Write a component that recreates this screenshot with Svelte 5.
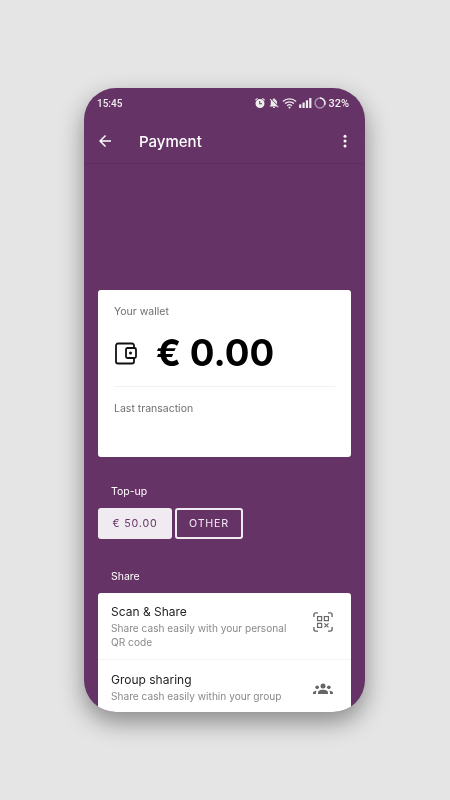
<script lang="ts">
  const shareOptions = [
    { title: 'Scan & Share', text: 'Share cash easily with your personal QR code', icon: 'qr' },
    { title: 'Group sharing', text: 'Share cash easily within your group', icon: 'group' }
  ];
</script>

<main class="stage">
  <div class="phone">
    <div class="status">
      <span class="time">15:45</span>
      <div class="status-icons">
        <svg width="12" height="12" viewBox="0 0 24 24" fill="#eee"><path d="M22 5.700 17.400 1.900l-1.300 1.500 4.600 3.900zM7.900 3.400 6.600 1.900 2 5.700l1.300 1.500zM12 4a9 9 0 1 0 0 18 9 9 0 0 0 0-18zm4 10.500h-5.500V8h2v4.500H16z"/></svg>
        <svg width="12" height="12" viewBox="0 0 24 24" fill="#eee"><path d="M20 18.700 7.300 5.900 4.800 3.400 3.400 4.800l2.800 2.800C5.700 8.600 5.500 9.800 5.500 11v5l-2 2v1h14.700l1.800 1.800 1.400-1.400zM12 22c1.100 0 2-.9 2-2h-4c0 1.100.9 2 2 2zm6-7.300V11c0-3.100-1.600-5.600-4.500-6.300V4a1.500 1.500 0 0 0-3 0v.7c-.7.200-1.300.4-1.900.8z"/></svg>
        <svg width="15" height="12" viewBox="0 0 24 20" fill="none" stroke="#eee" stroke-width="2.200"><path d="M1 7.500a16 16 0 0 1 22 0M4.500 11a11 11 0 0 1 15 0M8 14.500a6 6 0 0 1 8 0"/><circle cx="12" cy="17.500" r="1.800" fill="#eee" stroke="none"/></svg>
        <svg width="13" height="10" viewBox="0 0 14 11" fill="#eee"><rect x="0" y="7" width="2.400" height="4"/><rect x="3.700" y="5" width="2.400" height="6"/><rect x="7.400" y="2.500" width="2.400" height="8.500"/><rect x="11.100" y="0" width="2.400" height="11"/></svg>
        <svg class="battery" width="12" height="12" viewBox="0 0 12 12" fill="none"><circle cx="6" cy="6" r="4.900" stroke="#a792b0" stroke-width="1.500"/><path d="M6 1.100a4.900 4.900 0 0 1 4.500 6.800" stroke="#eee" stroke-width="1.500"/></svg>
        <span class="percent">32%</span>
      </div>
    </div>

    <header class="toolbar">
      <svg class="back" width="18" height="18" viewBox="0 0 24 24" fill="#fff"><path d="M20 11H7.800l5.600-5.600L12 4l-8 8 8 8 1.400-1.400L7.800 13H20z"/></svg>
      <h1>Payment</h1>
      <svg class="more" width="18" height="18" viewBox="0 0 24 24" fill="#fff"><circle cx="12" cy="5.500" r="2"/><circle cx="12" cy="12" r="2"/><circle cx="12" cy="18.500" r="2"/></svg>
    </header>

    <div class="content">
      <section class="wallet card">
        <p class="muted">Your wallet</p>
        <div class="balance">
          <svg class="wallet-icon" width="24" height="24" viewBox="0 0 24 24" fill="none" stroke="#111" stroke-width="1.800"><path d="M20 6V3.500a2 2 0 0 0-2-2H4a2 2 0 0 0-2 2v16a2 2 0 0 0 2 2h14a2 2 0 0 0 2-2V16"/><rect x="12" y="6" width="10" height="10" rx="1.500"/><circle cx="16.500" cy="11" r="1.500" fill="#111" stroke="none"/></svg>
          <span class="amount">€ 0.00</span>
        </div>
        <p class="muted last">Last transaction</p>
      </section>

      <h2 class="topup-label">Top-up</h2>
      <div class="buttons">
        <button class="fill">€ 50.00</button>
        <button class="outline">OTHER</button>
      </div>

      <h2 class="share-label">Share</h2>
      <ul class="card share">
        {#each shareOptions as opt}
          <li>
            <div class="opt-text">
              <strong>{opt.title}</strong>
              <span>{opt.text}</span>
            </div>
            {#if opt.icon === 'qr'}
              <svg class="opt-icon" width="20" height="20" viewBox="0 0 22 22" fill="none" stroke="#666" stroke-width="1.500"><path d="M1 5.500V3a2 2 0 0 1 2-2h2.500M16.500 1H19a2 2 0 0 1 2 2v2.500M21 16.500V19a2 2 0 0 1-2 2h-2.500M5.500 21H3a2 2 0 0 1-2-2v-2.500"/><rect x="5" y="5" width="4.500" height="4.500" stroke-width="1.300"/><rect x="12.500" y="5" width="4.500" height="4.500" stroke-width="1.300"/><rect x="5" y="12.500" width="4.500" height="4.500" stroke-width="1.300"/><path d="M12.500 12.500l4.500 4.500M17 12.500l-4.500 4.500" stroke-width="1.300"/></svg>
            {:else}
              <svg class="opt-icon" width="20" height="20" viewBox="0 0 24 24" fill="#666"><circle cx="12" cy="8.500" r="3"/><circle cx="5" cy="10" r="2.200"/><circle cx="19" cy="10" r="2.200"/><path d="M6 18v-1.500C6 14 9 13 12 13s6 1 6 3.500V18zM0 18v-1.200c0-1.500 1.700-2.500 4.500-2.600-.6.600-.9 1.400-.9 2.300V18zM24 18v-1.200c0-1.500-1.700-2.500-4.500-2.600.6.600.9 1.400.9 2.300V18z"/></svg>
            {/if}
          </li>
        {/each}
      </ul>
    </div>
  </div>
</main>

<style>
  :global(body) {
    margin: 0;
    background: #e5e5e5;
  }

  .stage {
    width: 449px;
    height: 800px;
    display: flex;
    justify-content: center;
    padding-top: 88px;
    box-sizing: border-box;
  }

  .phone {
    width: 281px;
    height: 624px;
    border-radius: 32px;
    background: #663366;
    overflow: hidden;
    box-shadow: 0 10px 24px rgba(0, 0, 0, 0.4);
    font-family: Inter, sans-serif;
    flex-shrink: 0;
    /* reference is a scaled-down capture, so everything is a bit soft */
    filter: blur(0.3px);
  }

  .status {
    height: 30px;
    display: flex;
    align-items: center;
    justify-content: space-between;
    padding: 0 16px 0 13px;
    color: #eee;
    font-family: Roboto, sans-serif;
    font-size: 10px;
    font-weight: 500;
    box-sizing: border-box;
  }

  .status-icons {
    display: flex;
    align-items: center;
    gap: 2px;
  }

  .percent {
    font-size: 11px;
  }

  .toolbar {
    height: 46px;
    display: flex;
    align-items: center;
    padding: 0 11px 0 12px;
    border-bottom: 1px solid #5e2e5e;
    box-sizing: border-box;
  }

  .toolbar h1 {
    margin: 2px 0 0 25px;
    flex: 1;
    color: #fff;
    font-size: 15px;
    font-weight: 500;
  }

  .content {
    padding: 126px 14px 0;
  }

  .card {
    background: #fff;
    border-radius: 3px;
  }

  .wallet {
    height: 167px;
    padding: 15px 16px 0;
    box-sizing: border-box;
  }

  .muted {
    margin: 0;
    color: #6f6f6f;
    font-size: 10.5px;
    line-height: 13px;
  }

  .balance {
    display: flex;
    align-items: center;
    gap: 19px;
    height: 50px;
    margin-top: 9px;
    padding-bottom: 9px;
    border-bottom: 1px solid #f1f1f1;
  }

  .wallet-icon {
    margin-top: 4px;
  }

  .amount {
    color: #000;
    font-size: 36.7px;
    font-weight: 700;
    margin-left: -1px;
  }

  .last {
    margin-top: 15px;
  }

  h2 {
    margin: 0;
    color: #fff;
    font-size: 10.5px;
    font-weight: 400;
    line-height: 13px;
    padding-left: 13px;
  }

  .topup-label {
    margin-top: 28px;
  }

  .buttons {
    display: flex;
    gap: 3px;
    margin-top: 10px;
  }

  button {
    height: 31px;
    border-radius: 3px;
    font-family: Inter, sans-serif;
    font-size: 10.7px;
    letter-spacing: 0.8px;
    padding: 0;
  }

  .fill {
    width: 74px;
    background: #f0ebf0;
    color: #663366;
    border: none;
  }

  .outline {
    width: 68px;
    background: transparent;
    color: #f3e9f3;
    border: 2px solid #f0ebf0;
  }

  .share-label {
    margin-top: 31px;
  }

  .share {
    list-style: none;
    margin: 10px 0 0;
    padding: 0;
    height: 130px;
  }

  .share li {
    display: flex;
    align-items: flex-start;
    justify-content: space-between;
    padding: 11px 18px 0 13px;
    height: 67px;
    box-sizing: border-box;
    border-bottom: 1px solid #f3f3f3;
  }

  .share li + li {
    padding-top: 12px;
    border-bottom: none;
  }

  .opt-icon {
    margin-top: 8px;
  }

  li + li .opt-icon {
    margin-top: 6.5px;
  }

  .opt-text {
    display: flex;
    flex-direction: column;
    width: 190px;
  }

  .opt-text strong {
    color: #222;
    font-size: 12px;
    font-weight: 400;
    line-height: 15px;
  }

  .opt-text span {
    color: #8a8a8a;
    font-size: 10.15px;
    line-height: 14px;
    margin-top: 2px;
  }
</style>
